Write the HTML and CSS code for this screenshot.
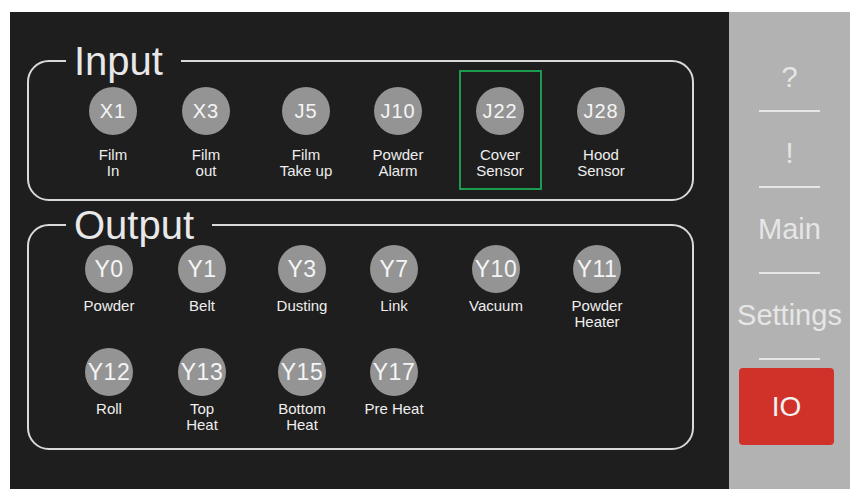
FILE: index.html
```html
<!DOCTYPE html>
<html lang="en">
<head>
    <meta charset="UTF-8">
    <meta name="viewport" content="width=device-width, initial-scale=1.0">
    <title>IO</title>
    <link rel="stylesheet" href="styles.css">
</head>
<body>
    <div class="screen">
        <div class="io-panel">
            <fieldset class="io-group input">
                <legend>Input</legend>
                <div class="io-grid">
                    <div class="io-item"><div class="io-led">X1</div><div class="io-label">Film<br>In</div></div>
                    <div class="io-item"><div class="io-led">X3</div><div class="io-label">Film<br>out</div></div>
                    <div class="io-item"><div class="io-led">J5</div><div class="io-label">Film<br>Take up</div></div>
                    <div class="io-item"><div class="io-led">J10</div><div class="io-label">Powder<br>Alarm</div></div>
                    <div class="io-item selected"><div class="io-led">J22</div><div class="io-label">Cover<br>Sensor</div></div>
                    <div class="io-item"><div class="io-led">J28</div><div class="io-label">Hood<br>Sensor</div></div>
                </div>
            </fieldset>

            <fieldset class="io-group output">
                <legend>Output</legend>
                <div class="io-grid">
                    <div class="io-item"><div class="io-led">Y0</div><div class="io-label">Powder</div></div>
                    <div class="io-item"><div class="io-led">Y1</div><div class="io-label">Belt</div></div>
                    <div class="io-item"><div class="io-led">Y3</div><div class="io-label">Dusting</div></div>
                    <div class="io-item"><div class="io-led">Y7</div><div class="io-label">Link</div></div>
                    <div class="io-item"><div class="io-led">Y10</div><div class="io-label">Vacuum</div></div>
                    <div class="io-item"><div class="io-led">Y11</div><div class="io-label">Powder<br>Heater</div></div>
                    <div class="io-item"><div class="io-led">Y12</div><div class="io-label">Roll</div></div>
                    <div class="io-item"><div class="io-led">Y13</div><div class="io-label">Top<br>Heat</div></div>
                    <div class="io-item"><div class="io-led">Y15</div><div class="io-label">Bottom<br>Heat</div></div>
                    <div class="io-item"><div class="io-led">Y17</div><div class="io-label">Pre Heat</div></div>
                </div>
            </fieldset>
        </div>

        <div class="sidebar">
            <div class="nav-link icon">?</div>
            <div class="nav-sep"></div>
            <div class="nav-link icon">!</div>
            <div class="nav-sep"></div>
            <div class="nav-link">Main</div>
            <div class="nav-sep"></div>
            <div class="nav-link">Settings</div>
            <div class="nav-sep"></div>
            <div class="nav-button">IO</div>
        </div>
    </div>
</body>
</html>
```

FILE: styles.css
```css
body {
    font-family: 'Liberation Sans', Arial, sans-serif;
    margin: 0;
    background-color: #ffffff;
}
.screen {
    display: flex;
    width: 840px;
    height: 477px;
    margin: 12px 0 0 10px;
}
.io-panel {
    flex: 1;
    background-color: #1e1e1e;
    padding: 40px 35px 0 17px;
    box-sizing: border-box;
}
.io-group {
    margin: 0;
    padding: 0;
    min-width: 0;
    border: 2px solid #d9d9d9;
    border-radius: 22px;
}
.io-group legend {
    margin-left: 37px;
    padding: 0 18px 0 8px;
    font-size: 40px;
    line-height: 18px;
    color: #e8e8e8;
}
.io-grid {
    display: grid;
    grid-template-columns: 86px 100px 100px 84px 120px 82px;
    justify-content: start;
}
.io-item {
    display: flex;
    flex-direction: column;
    align-items: center;
    justify-self: center;
    width: 82px;
    box-sizing: border-box;
}
.io-led {
    width: 48px;
    height: 48px;
    border-radius: 50%;
    background-color: #949494;
    color: #f4f4f4;
    display: flex;
    align-items: center;
    justify-content: center;
    white-space: nowrap;
}
.io-label {
    font-size: 15px;
    line-height: 16px;
    color: #eeeeee;
    text-align: center;
    white-space: nowrap;
}

/* input block */
.input .io-grid {
    padding: 0 0 9px 41px;
}
.input .io-item {
    gap: 12px;
    padding: 15px 0 9px;
    border: 2px solid transparent;
    width: 83px;
}
.input .io-item.selected {
    border-color: #1c9a4e;
}
.input .io-led {
    font-size: 20px;
    letter-spacing: 1px;
}

/* output block */
.output {
    margin-top: 15px;
}
.output .io-grid {
    padding: 11px 0 15px 37px;
    row-gap: 18px;
}
.output .io-item {
    gap: 5px;
}
.output .io-led {
    font-size: 23px;
    letter-spacing: 0.5px;
}

/* side menu */
.sidebar {
    width: 121px;
    background-color: #b1b2b1;
    padding-top: 24px;
    box-sizing: border-box;
    display: flex;
    flex-direction: column;
    align-items: center;
}
.nav-link {
    font-size: 29px;
    line-height: 33px;
    color: #e6e6e6;
    padding: 25px 0 26px;
}
.nav-link.icon {
    padding-bottom: 16px;
}
.nav-sep {
    width: 61px;
    height: 2px;
    background-color: #e6e6e6;
}
.nav-button {
    margin: 8px 6px 0 0;
    width: 95px;
    height: 77px;
    border-radius: 4px;
    background-color: #d0322a;
    color: #f2f2f2;
    font-size: 28px;
    display: flex;
    align-items: center;
    justify-content: center;
}
```
